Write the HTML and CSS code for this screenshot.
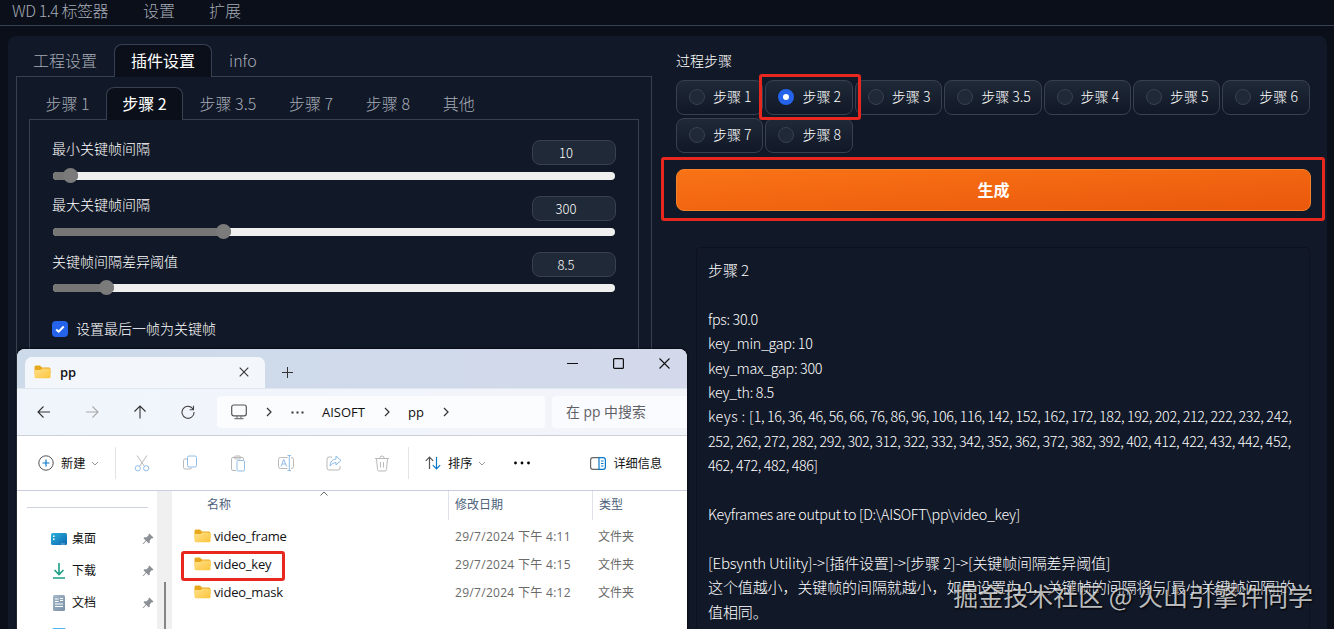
FILE: index.html
```html
<!DOCTYPE html>
<html lang="zh-CN">
<head>
  <meta charset="UTF-8">
  <title>Ebsynth Utility</title>
  <link rel="stylesheet" href="styles.css">
</head>
<body>

  <nav class="top-nav">
    <span>WD 1.4 标签器</span>
    <span>设置</span>
    <span>扩展</span>
  </nav>

  <main class="panel">
    <!-- Settings -->
    <section class="settings">
      <div class="tabs">
        <span class="tab">工程设置</span>
        <span class="tab active">插件设置</span>
        <span class="tab">info</span>
      </div>
      <div class="tab-body outer">
        <div class="tabs inner-tabs">
          <span class="tab">步骤 1</span>
          <span class="tab active">步骤 2</span>
          <span class="tab">步骤 3.5</span>
          <span class="tab">步骤 7</span>
          <span class="tab">步骤 8</span>
          <span class="tab">其他</span>
        </div>
        <div class="tab-body inner">
          <div class="slider">
            <div class="slider-head"><label>最小关键帧间隔</label><span class="number">10</span></div>
            <div class="track"><div class="fill" style="width: 25px"></div></div>
          </div>
          <div class="slider">
            <div class="slider-head"><label>最大关键帧间隔</label><span class="number">300</span></div>
            <div class="track"><div class="fill" style="width: 178px"></div></div>
          </div>
          <div class="slider">
            <div class="slider-head"><label>关键帧间隔差异阈值</label><span class="number">8.5</span></div>
            <div class="track"><div class="fill" style="width: 61px"></div></div>
          </div>
          <div class="check-row">
            <span class="checkbox"><svg width="16" height="16" viewBox="0 0 16 16"><path d="M4.2 8.4l2.5 2.3 5-5.2" fill="none" stroke="#fff" stroke-width="2"/></svg></span>
            <span class="check-label">设置最后一帧为关键帧</span>
          </div>
        </div>
      </div>
    </section>

    <!-- Run -->
    <section class="run">
      <div class="group-title">过程步骤</div>
      <div class="radios">
        <span class="radio"><i></i>步骤 1</span>
        <span class="radio checked"><i></i>步骤 2<b class="mark"></b></span>
        <span class="radio"><i></i>步骤 3</span>
        <span class="radio"><i></i>步骤 3.5</span>
        <span class="radio"><i></i>步骤 4</span>
        <span class="radio"><i></i>步骤 5</span>
        <span class="radio"><i></i>步骤 6</span>
        <span class="radio"><i></i>步骤 7</span>
        <span class="radio"><i></i>步骤 8</span>
      </div>
      <div class="generate">生成<b class="mark"></b></div>
      <div class="output">
        <p class="zh">步骤 2</p>
        <p class="gap">fps: 30.0</p>
        <p>key_min_gap: 10</p>
        <p>key_max_gap: 300</p>
        <p>key_th: 8.5</p>
        <p class="keys"><span>keys : [</span>1, 16, 36, 46, 56, 66, 76, 86, 96, 106, 116, 142, 152, 162, 172, 182, 192, 202, 212, 222, 232, 242,<br>252, 262, 272, 282, 292, 302, 312, 322, 332, 342, 352, 362, 372, 382, 392, 402, 412, 422, 432, 442, 452,<br>462, 472, 482, 486]</p>
        <p class="gap">Keyframes are output to [D:\AISOFT\pp\video_key]</p>
        <p class="gap path">[Ebsynth Utility]-&gt;[插件设置]-&gt;[步骤 2]-&gt;[关键帧间隔差异阈值]</p>
        <p class="zh">这个值越小，关键帧的间隔就越小，如果设置为 0，关键帧的间隔将与[最小关键帧间隔]的<br>值相同。</p>
      </div>
    </section>
  </main>

  <svg class="defs" width="0" height="0">
    <linearGradient id="gold" x1="0" y1="0" x2="1" y2="1"><stop offset="0" stop-color="#ffe08a"/><stop offset="1" stop-color="#fcc53c"/></linearGradient>
    <linearGradient id="desk" x1="0" y1="0" x2="1" y2="1"><stop offset="0" stop-color="#2bb3dc"/><stop offset="1" stop-color="#0a66b0"/></linearGradient>
    <linearGradient id="doc" x1="0" y1="0" x2="1" y2="1"><stop offset="0" stop-color="#a5b7c8"/><stop offset="1" stop-color="#7890a8"/></linearGradient>
    <symbol id="folder" viewBox="0 0 17 14">
      <path d="M.5 2Q.5.5 2 .5h4L8 2.5h7q1.5 0 1.5 1.5v5H.5z" fill="#e6a91e"/>
      <path d="M.5 5h6l2-1.6h6.7q1.3 0 1.3 1.3v7.2q0 1.4-1.3 1.4H1.8Q.5 13.300.5 12z" fill="url(#gold)"/>
    </symbol>
    <symbol id="pin" viewBox="0 0 12 12">
      <path d="M7.300.6l4.100 4-1 .8-.7-.1-2 2.100.1 2-1 1.100-2.400-2.400L1.500 11l-.8.3.2-.8L3.700 7.500 1.500 5.200l1-1 2.100.100 2-2-.1-.7z" fill="#8b9096"/>
    </symbol>
    <symbol id="down" viewBox="0 0 8 5"><path d="M1 1l3 3 3-3" fill="none" stroke="#999" stroke-width="1"/></symbol>
    <symbol id="right" viewBox="0 0 6 10"><path d="M1 1l4 4-4 4" fill="none" stroke="#333" stroke-width="1.200"/></symbol>
  </svg>

  <!-- File explorer -->
  <div class="explorer">
    <div class="title-bar">
      <div class="window-tab">
        <svg width="17" height="14"><use href="#folder"/></svg>
        <span>pp</span>
        <svg class="close" width="10" height="10" viewBox="0 0 10 10"><path d="M.7.7l8.600 8.600M9.300.7L.7 9.300" stroke="#333" stroke-width="1.100"/></svg>
      </div>
      <svg class="plus" width="11" height="11" viewBox="0 0 11 11"><path d="M5.500 0v11M0 5.500h11" stroke="#333"/></svg>
      <div class="window-buttons">
        <svg width="11" height="11" viewBox="0 0 11 11"><path d="M0 5.500h11" stroke="#111"/></svg>
        <svg width="11" height="11" viewBox="0 0 11 11"><rect x=".6" y=".6" width="9.800" height="9.800" rx="1" fill="none" stroke="#111" stroke-width="1.200"/></svg>
        <svg width="11" height="11" viewBox="0 0 11 11"><path d="M.5.5l10 10M10.500.5l-10 10" stroke="#111" stroke-width="1.100"/></svg>
      </div>
    </div>

    <div class="address-bar">
      <div class="nav-icons">
        <svg width="14" height="14" viewBox="0 0 14 14"><path d="M13 7H1M6.500 1.500L1 7l5.500 5.500" fill="none" stroke="#333" stroke-width="1.100"/></svg>
        <svg width="14" height="14" viewBox="0 0 14 14"><path d="M1 7h12M7.500 1.500L13 7l-5.500 5.500" fill="none" stroke="#aaa" stroke-width="1.100"/></svg>
        <svg width="14" height="14" viewBox="0 0 14 14"><path d="M7 13.500V1M1.500 6.500L7 1l5.500 5.500" fill="none" stroke="#333" stroke-width="1.100"/></svg>
        <svg width="14" height="14" viewBox="0 0 14 14"><path d="M12.300 4.500A6 6 0 1 0 13 7M12.500.8v3.900H8.700" fill="none" stroke="#444" stroke-width="1.100"/></svg>
      </div>
      <div class="crumbs">
        <svg class="pc" width="16" height="16" viewBox="0 0 16 16"><rect x=".7" y="1" width="14.600" height="10.800" rx="2" fill="none" stroke="#555" stroke-width="1.200"/><path d="M6 12v2.500M10 12v2.500M3.500 14.700h9" stroke="#777" stroke-width="1.200"/></svg>
        <svg class="c1" width="6" height="10"><use href="#right"/></svg>
        <svg class="c2" width="13" height="3" viewBox="0 0 13 3"><path d="M.5.5h2v2h-2zM5.500.5h2v2h-2zM10.500.5h2v2h-2z" fill="#333"/></svg>
        <span class="c3">AISOFT</span>
        <svg class="c4" width="6" height="10"><use href="#right"/></svg>
        <span class="c5">pp</span>
        <svg class="c6" width="6" height="10"><use href="#right"/></svg>
      </div>
      <div class="search">在 pp 中搜索</div>
    </div>

    <div class="toolbar">
      <div class="new">
        <svg width="16" height="16" viewBox="0 0 16 16"><circle cx="8" cy="8" r="7.200" fill="none" stroke="#555"/><path d="M8 4.500v7M4.500 8h7" stroke="#0a78c8" stroke-width="1.200"/></svg>
        <span>新建</span>
        <svg width="8" height="5"><use href="#down"/></svg>
      </div>
      <div class="actions">
        <svg width="16" height="17" viewBox="0 0 16 17" fill="none"><path d="M3 .5l7.500 11M13 .5l-7.500 11" stroke="#b9b9b9"/><circle cx="3.800" cy="13.300" r="2.600" stroke="#8fbde8"/><circle cx="12.200" cy="13.300" r="2.600" stroke="#8fbde8"/></svg>
        <svg width="16" height="16" viewBox="0 0 16 16" fill="none"><path d="M5 4H3Q1.500 4 1.500 5.500v7Q1.500 14 3 14h5q1.500 0 1.500-1.500" stroke="#b9b9b9"/><rect x="5.500" y="1" width="9" height="11" rx="1.500" stroke="#8fbde8"/></svg>
        <svg width="16" height="17" viewBox="0 0 16 17" fill="none"><path d="M6 15.500H3Q1.500 15.500 1.500 14V4Q1.500 2.500 3 2.500h9q1.500 0 1.500 1.500v1" stroke="#b9b9b9"/><rect x="4.500" y="1" width="6" height="3" rx="1.200" stroke="#b9b9b9"/><rect x="7" y="5.500" width="7.500" height="10.500" rx="1.200" stroke="#8fbde8"/></svg>
        <svg width="16" height="16" viewBox="0 0 16 16" fill="none"><path d="M9.500 2.500H2.500Q.5 2.500.5 4.500v7q0 2 2 2h7M13 2.500q2.500 0 2.500 2v7q0 2-2.500 2" stroke="#b9b9b9"/><path d="M3 11.500l2.800-7 2.800 7M4 9h3.600M11.300.5v15M9.500.5H13M9.500 15.500H13" stroke="#8fbde8"/></svg>
        <svg width="16" height="16" viewBox="0 0 16 16" fill="none"><path d="M6 2H3Q1 2 1 4v9q0 2 2 2h9q2 0 2-2v-2" stroke="#b9b9b9"/><path d="M10 1l5 4.500-5 4.500V7.500Q6 7.300 4 11q.3-6.500 6-7z" stroke="#8fbde8"/></svg>
        <svg width="14" height="17" viewBox="0 0 14 17" fill="none" stroke="#b9b9b9"><path d="M0 3.500h14M4.800 3.300Q4.800 1 7 1t2.200 2.300M1.500 3.500l1 11q.2 1.500 1.500 1.500h6q1.300 0 1.500-1.500l1-11M5.500 7v5.500M8.500 7v5.500"/></svg>
      </div>
      <div class="sort">
        <svg width="16" height="14" viewBox="0 0 16 14" fill="none"><path d="M4.500 13V1M.8 4.800L4.500 1l3.700 3.800" stroke="#555" stroke-width="1.200"/><path d="M11.500 1v12M7.800 9.200l3.700 3.800 3.700-3.800" stroke="#0a78c8" stroke-width="1.200"/></svg>
        <span>排序</span>
        <svg width="8" height="5"><use href="#down"/></svg>
      </div>
      <svg class="more" width="16" height="4" viewBox="0 0 16 4"><circle cx="1.500" cy="2" r="1.400"/><circle cx="8" cy="2" r="1.400"/><circle cx="14.500" cy="2" r="1.400"/></svg>
      <div class="details">
        <svg width="16" height="13" viewBox="0 0 16 13" fill="none"><path d="M9 .6H3Q.6.6.6 3v7q0 2.400 2.400 2.400h6" stroke="#666" stroke-width="1.200"/><path d="M9 .6h4q2.400 0 2.400 2.400v7q0 2.400-2.400 2.400H9zM11 4h2.500M11 6.500h2.500M11 9h2.500" stroke="#0a78c8" stroke-width="1.200"/></svg>
        <span>详细信息</span>
      </div>
    </div>

    <div class="content">
      <div class="sidebar">
        <div class="side-item">
          <svg width="16" height="16" viewBox="0 0 16 16"><rect y="2" width="16" height="12" rx="1.500" fill="url(#desk)"/><path d="M2 4.500h1.500V6H2zM2 7.500h1.500V9H2z" fill="#fff"/><path d="M10.500 13h1M12.500 13h1" stroke="#fff"/></svg>
          <span>桌面</span>
          <svg width="12" height="12"><use href="#pin"/></svg>
        </div>
        <div class="side-item">
          <svg width="16" height="16" viewBox="0 0 16 16" fill="none" stroke="#1c9f86" stroke-width="1.600"><path d="M8 0v11.500M3.500 7L8 11.500 12.500 7M2 15h12"/></svg>
          <span>下载</span>
          <svg width="12" height="12"><use href="#pin"/></svg>
        </div>
        <div class="side-item">
          <svg width="16" height="16" viewBox="0 0 16 16"><rect x="2" width="12" height="16" rx="1.500" fill="url(#doc)"/><path d="M4 4h3.500M9 3.500h3M9 5.500h3M4 6.500h3.500M4 9h8M4 11.500h8" stroke="#fff" stroke-width="1.200"/></svg>
          <span>文档</span>
          <svg width="12" height="12"><use href="#pin"/></svg>
        </div>
        <div class="side-item">
          <svg width="16" height="16" viewBox="0 0 16 16"><rect x="1" y="1" width="14" height="14" rx="2" fill="#55b4ee"/></svg>
        </div>
      </div>
      <div class="scrollbar"><div class="thumb"></div></div>
      <div class="files">
        <div class="file-row head">
          <span>名称<svg class="sorted" width="8" height="5" viewBox="0 0 8 5"><path d="M.5 4.500L4 1l3.500 3.500" fill="none" stroke="#666"/></svg></span><span>修改日期</span><span>类型</span>
        </div>
        <div class="file-row">
          <span class="name"><svg width="17" height="14"><use href="#folder"/></svg>video_frame</span><span>29/7/2024 下午 4:11</span><span>文件夹</span>
        </div>
        <div class="file-row">
          <span class="name"><svg width="17" height="14"><use href="#folder"/></svg>video_key<b class="mark"></b></span><span>29/7/2024 下午 4:15</span><span>文件夹</span>
        </div>
        <div class="file-row">
          <span class="name"><svg width="17" height="14"><use href="#folder"/></svg>video_mask</span><span>29/7/2024 下午 4:12</span><span>文件夹</span>
        </div>
      </div>
    </div>
  </div>

  <div class="watermark">掘金技术社区 @ 火山引擎许同学</div>

</body>
</html>
```
FILE: styles.css
```css
* {
  box-sizing: border-box;
}

body {
  margin: 0;
  width: 1334px;
  height: 629px;
  overflow: hidden;
  position: relative;
  background: #0b0f19;
  color: #fff;
  font-family: "Noto Sans CJK SC", sans-serif;
  font-size: 14px;
  font-weight: 300;
  white-space: nowrap;
}

svg {
  display: block;
  flex: none;
}

.defs {
  position: absolute;
}

.top-nav {
  display: flex;
  gap: 34px;
  height: 26px;
  padding-left: 12px;
  border-bottom: 1px solid #374151;
  font-size: 16px;
  line-height: 20px;
  color: #a5abb6;
}

.top-nav span:first-child {
  width: 97px;
  letter-spacing: -0.45px;
}

.panel {
  display: grid;
  grid-template-columns: 636px 635px;
  gap: 24px;
  width: 1319px;
  height: 620px;
  margin: 10px 0 0 8px;
  padding: 8px;
  border-radius: 8px;
  background: #111827;
}

/* Tabs */
.tabs {
  display: flex;
  height: 33px;
  margin-bottom: -1px;
  position: relative;
}

.tab {
  height: 33px;
  padding: 0 16px;
  border: 1px solid transparent;
  border-bottom: none;
  border-radius: 8px 8px 0 0;
  font-size: 16px;
  line-height: 31px;
  color: #a5abb6;
}

.tab.active {
  background: #0b0f19;
  border-color: #374151;
  color: #fff;
  font-weight: 400;
}

.inner-tabs .tab {
  padding: 0 15.4px;
}

.tab-body {
  border: 1px solid #374151;
}

.outer {
  height: 560px;
  padding: 10px 12px 0;
}

.inner {
  height: 500px;
  padding: 20px 22px 0 22px;
}

/* Sliders */
.slider {
  height: 56.1px;
}

.slider:nth-child(3) label {
  line-height: 19px;
}

.slider-head {
  display: flex;
  justify-content: space-between;
}

.slider-head label {
  line-height: 17px;
}

.number {
  width: 84px;
  height: 25px;
  padding-right: 16px;
  border: 1px solid #374151;
  border-radius: 8px;
  background: #1f2937;
  font-size: 13px;
  line-height: 23px;
  text-align: center;
}

.track {
  height: 8px;
  width: 562px;
  margin: 7px 0 0 1px;
  border-radius: 4px;
  background: #efefef;
}

.fill {
  height: 8px;
  border-radius: 4px;
  background: #767676;
  position: relative;
}

.fill::after {
  content: "";
  position: absolute;
  right: 0;
  top: -4px;
  width: 15px;
  height: 15px;
  border-radius: 50%;
  background: #7b7b7b;
}

.check-row {
  display: flex;
  align-items: center;
  gap: 8px;
  margin-top: 10px;
}

.check-label {
  padding-bottom: 2px;
}

.checkbox {
  width: 16px;
  height: 16px;
  border-radius: 4px;
  background: #2563eb;
}

/* Process steps */
.group-title {
  margin-top: 6px;
  line-height: 20px;
}

.radios {
  display: flex;
  flex-wrap: wrap;
  gap: 3px 2px;
  margin-top: 10px;
}

.radio {
  display: flex;
  align-items: flex-start;
  gap: 8px;
  height: 35px;
  width: 87.4px;
  padding-left: 12px;
  border: 1px solid #374151;
  border-radius: 8px;
  background: linear-gradient(#1f2937, #111827);
  line-height: 30px;
  position: relative;
}

.radio:nth-child(4) {
  width: 97.4px;
}

.radio i {
  width: 16px;
  height: 16px;
  margin-top: 8px;
  border: 1px solid #374151;
  border-radius: 50%;
  background: #1f2937;
}

.radio.checked i {
  border: 5px solid #2563eb;
  background: #fff;
}

.mark {
  position: absolute;
  border: 3px solid #e8281e;
  border-radius: 3px;
  z-index: 2;
}

.radio .mark {
  left: -7px;
  top: -7px;
  width: 102px;
  height: 46px;
}

.generate {
  height: 42px;
  margin-top: 16px;
  border: 1px solid #f5812a;
  border-radius: 8px;
  background: linear-gradient(to bottom right, #f97316, #ea580c);
  font-size: 16px;
  font-weight: 700;
  line-height: 38px;
  text-align: center;
  position: relative;
}

.generate .mark {
  left: -16px;
  top: -13px;
  width: 664px;
  height: 64px;
}

.output {
  width: 614px;
  height: 400px;
  margin: 36px 0 0 20px;
  padding: 10px 11px 0;
  border: 1px solid #0c121e;
  border-radius: 4px;
  font-size: 14.3px;
  line-height: 24.4px;
  letter-spacing: -0.3px;
}

.output p {
  margin: 0;
}

.output p.gap {
  margin-top: 24.4px;
}

.output .keys {
  letter-spacing: -0.36px;
}

.output .keys span {
  letter-spacing: 0.35px;
}

.output .zh {
  font-size: 15px;
  letter-spacing: -0.1px;
}

.output .path {
  font-size: 15px;
  letter-spacing: -0.2px;
}

/* Explorer window */
.explorer {
  position: absolute;
  left: 17px;
  top: 349px;
  width: 670px;
  height: 290px;
  overflow: hidden;
  border-radius: 8px 8px 0 0;
  background: #fff;
  color: #111;
  font-family: "Open Sans", "Noto Sans CJK SC", sans-serif;
  font-size: 13px;
  font-weight: 400;
  box-shadow: 0 0 3px #000;
}

.title-bar {
  display: flex;
  height: 39px;
  padding: 8px 0 0 8px;
  background: linear-gradient(to right, #ccdaea, #d3d9ea);
}

.window-tab {
  display: flex;
  align-items: center;
  width: 240px;
  height: 31px;
  padding: 0 16px 1px 9px;
  border-radius: 7px 7px 0 0;
  background: #f3f7fc;
  font-weight: 600;
}

.window-tab span {
  margin-left: 9px;
}

.window-tab .close {
  margin-left: auto;
}

.plus {
  margin: 10px 0 0 17px;
}

.window-buttons {
  display: flex;
  gap: 35px;
  margin: 1px 17px 0 auto;
}

.address-bar {
  display: flex;
  align-items: center;
  height: 48px;
  border-top: 1px solid #dfe7f1;
  border-bottom: 1px solid #cbd0da;
  background: linear-gradient(to right, #f0f5fc, #f3f4fa);
}

.nav-icons {
  display: flex;
  gap: 34px;
  width: 200px;
  padding-left: 20px;
}

.crumbs {
  display: flex;
  align-items: center;
  width: 328px;
  height: 32px;
  padding-left: 14px;
  border-radius: 4px;
  background: #fbfcfe;
}

.c1 {
  margin-left: 19px;
}

.c2 {
  margin-left: 19px;
}

.c3 {
  width: 47px;
  margin-left: 18px;
}

.c4 {
  margin-left: 15px;
}

.c5 {
  margin-left: 18px;
}

.c6 {
  margin-left: 19px;
}

.search {
  flex: 1;
  height: 32px;
  margin-left: 7px;
  padding-left: 14px;
  border-radius: 4px 0 0 4px;
  background: #fafbfe;
  color: #5e6064;
  font-size: 13.9px;
  line-height: 31px;
}

.toolbar {
  display: flex;
  align-items: center;
  height: 55px;
  border-bottom: 1px solid #c9ccdc;
  font-size: 12.2px;
}

.new {
  display: flex;
  align-items: center;
  width: 99px;
  height: 32px;
  padding-left: 21px;
  border-right: 1px solid #e4e4e4;
}

.new span {
  margin: 0 6px 0 7px;
}

.actions {
  display: flex;
  align-items: center;
  width: 293px;
  height: 32px;
  padding-left: 2px;
  border-right: 1px solid #e4e4e4;
}

.actions svg {
  margin: 0 16px;
}

.actions svg:last-child {
  margin: 0 17px;
}

.sort {
  display: flex;
  align-items: center;
  margin-left: 16px;
}

.sort span {
  margin: 0 6px 0 7px;
}

.more {
  margin-left: 28px;
}

.details {
  display: flex;
  align-items: center;
  gap: 7px;
  margin-left: 60px;
}

.content {
  display: flex;
  height: 148px;
}

.sidebar {
  width: 140px;
}

.sidebar::before {
  content: "";
  display: block;
  height: 1px;
  margin: 16px 9px 15px 10px;
  background: #cfd3e0;
}

.side-item {
  display: flex;
  align-items: center;
  height: 32px;
  padding-left: 34px;
  font-size: 12px;
}

.side-item span {
  width: 70px;
  margin-left: 5px;
  padding-bottom: 2px;
}

.scrollbar {
  width: 15px;
  background: #f0f0f0;
}

.thumb {
  width: 2px;
  height: 60px;
  margin: 91px 0 0 7px;
  background: #858585;
}

.files {
  flex: 1;
  padding-left: 4px;
}

.file-row {
  display: grid;
  grid-template-columns: 272px 144px 1fr;
  align-items: center;
  height: 28px;
  font-size: 12px;
  color: #6a6a6a;
}

.file-row span {
  padding-bottom: 2px;
}

.file-row span:nth-child(2) {
  padding-left: 7px;
  letter-spacing: 0.3px;
}

.file-row span:nth-child(3) {
  padding-left: 6px;
}

.file-row.head {
  height: 32px;
  color: #4c607a;
  line-height: 27px;
  align-items: start;
}

.head span:first-child {
  padding-left: 31px;
  position: relative;
}

.file-row.head span:nth-child(n+2) {
  padding-left: 6px;
  border-left: 1px solid #dfe1ea;
  letter-spacing: 0;
}

.head .sorted {
  position: absolute;
  left: 144px;
  top: 0;
}

.file-row .name {
  display: flex;
  align-items: center;
  gap: 3px;
  padding-left: 18px;
  font-size: 13px;
  letter-spacing: -0.2px;
  color: #111;
  position: relative;
}

.name .mark {
  left: 5px;
  top: -4px;
  width: 104px;
  height: 30px;
}

.watermark {
  position: absolute;
  right: 21px;
  top: 577px;
  font-size: 25px;
  font-weight: 400;
  line-height: 36px;
  color: rgba(255, 255, 255, 0.72);
  text-shadow: 1px 1px 2px #000;
}
```
